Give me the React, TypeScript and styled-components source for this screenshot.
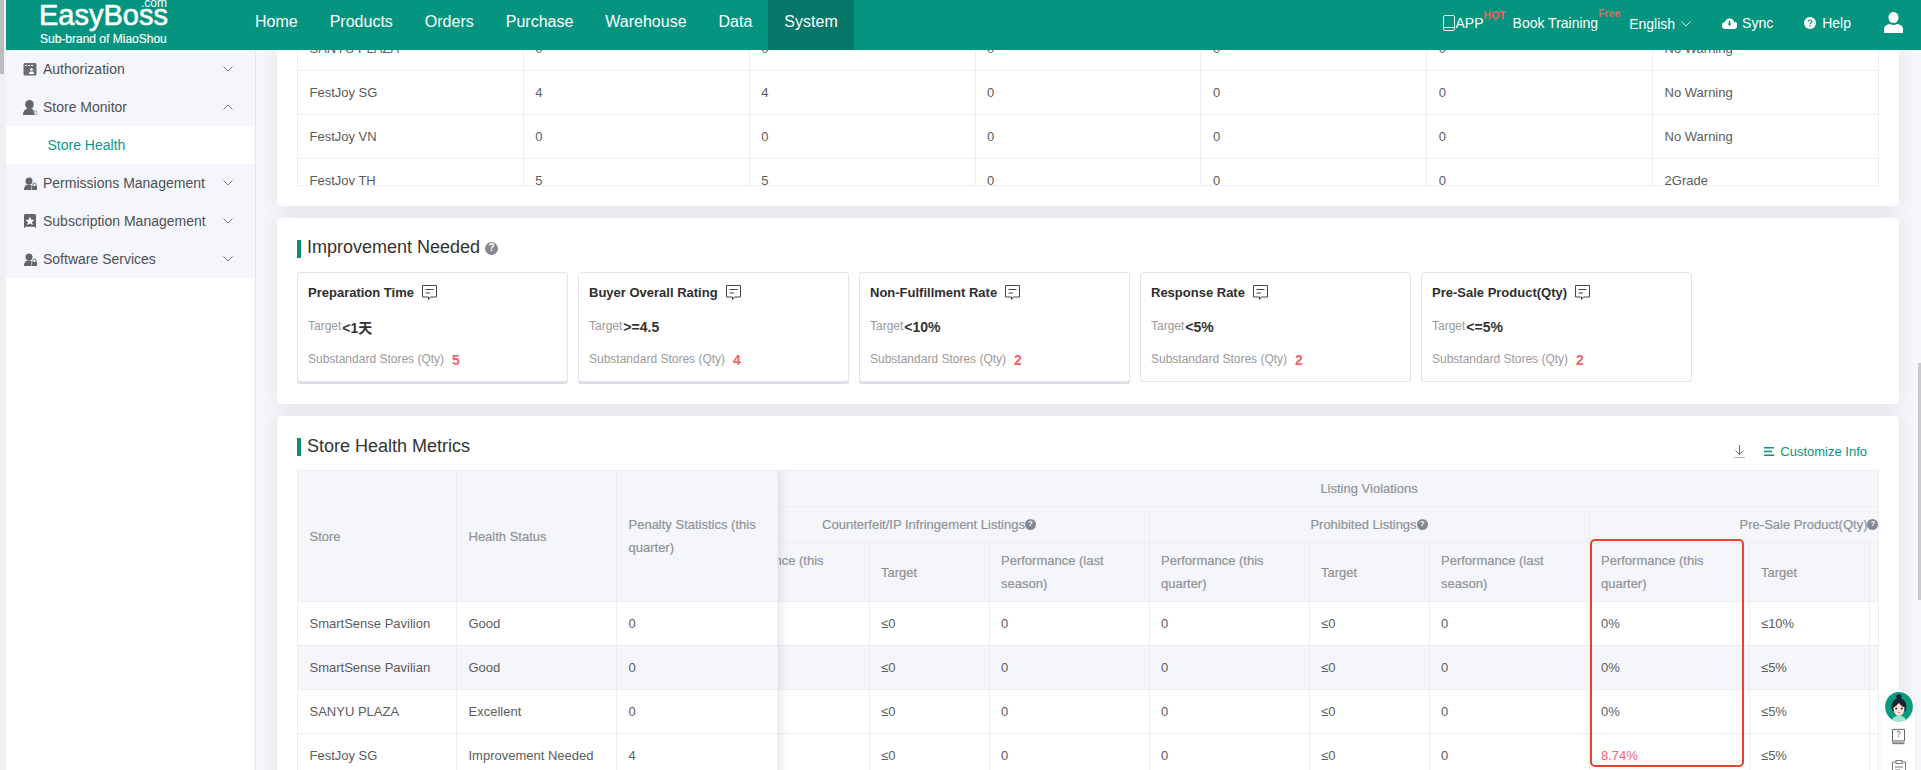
import React from "react";
import styled, { createGlobalStyle } from "styled-components";

const Global = createGlobalStyle`
  html, body { margin: 0; padding: 0; width: 1921px; height: 770px; overflow: hidden; background: #fff; }
  body { font-family: "Liberation Sans", Arial, "Noto Sans CJK SC", sans-serif; color: #555; }
  * { box-sizing: border-box; }
`;

const TEAL = "#059480";
const LINE = "#eceef4";

const Frame = styled.div`display: flex; width: 1921px; height: 770px; overflow: hidden;`;
const LeftRail = styled.div`width: 6px; flex: none; background: #f0f0f0;`;
const LeftThumb = styled.div`width: 4px; height: 74px; background: #bcbcbc;`;
const Column = styled.div`flex: 1; min-width: 0; display: flex; flex-direction: column;`;

const Header = styled.header`height: 50px; flex: none; display: flex; background: ${TEAL}; color: #fff; position: relative; z-index: 2;`;
const Logo = styled.div`width: 200px; margin-left: 33px; flex: none; position: relative;`;
const LogoName = styled.div`font-size: 29px; line-height: 30px; height: 32px; -webkit-text-stroke: 0.6px #fff;`;
const LogoDotCom = styled.span`position: absolute; left: 102px; top: -1px; font-size: 12px; line-height: 9px;`;
const LogoSub = styled.div`font-size: 12px; line-height: 14px; padding-left: 1px; -webkit-text-stroke: 0.15px #fff;`;
const Nav = styled.nav`display: flex; height: 100%;`;
const NavItem = styled.a<{ $active?: boolean }>`
  padding: 0 16px; height: 50px; line-height: 43px; font-size: 16px; color: #fff;
  background: ${(p) => (p.$active ? "#07776a" : "transparent")};
`;
const HeaderTools = styled.div`margin-left: auto; display: flex; align-items: center; gap: 31px; height: 45px; padding-right: 18px; font-size: 14px;`;
const Tool = styled.div`position: relative; display: flex; align-items: center; gap: 5px; line-height: 16px;`;
const ToolBadge = styled.span<{ $top: number }>`
  position: absolute; left: 100%; top: ${(p) => p.$top}px; font-size: 10.5px; line-height: 12px; font-weight: 700; color: #ec6360; white-space: nowrap;
`;
const UserTool = styled(Tool)`margin-left: 2px;`;
const AppTool = styled(Tool)`gap: 1px; margin-right: -2px;`;
const LanguageTool = styled(Tool)`gap: 6px; top: 1px;`;
const HelpTool = styled(Tool)`gap: 6px;`;

const Body = styled.div`flex: 1; display: flex; min-height: 0;`;
const Sidebar = styled.aside`width: 250px; flex: none; background: #fff; border-right: 1px solid #e3e4e9; position: relative; z-index: 1;`;
const MenuItem = styled.div<{ $sub?: boolean }>`
  height: 38px; display: flex; align-items: center; gap: 6px; font-size: 14px;
  padding: 0 22px 0 ${(p) => (p.$sub ? "41.5px" : "17px")};
  background: ${(p) => (p.$sub ? "#fff" : "#f5f6fb")};
  color: ${(p) => (p.$sub ? "#0a9a87" : "#4c4f55")};
`;
const MenuLabel = styled.span`flex: 1;`;

const Main = styled.main`flex: 1; min-width: 0; background: #f5f6fa; padding: 0 22px 0 21px; overflow: hidden; position: relative;`;
const Card = styled.section`background: #fff; border-radius: 4px; box-shadow: 0 0 20px rgba(20, 30, 60, 0.09); padding: 0 20px;`;
const TopCard = styled(Card)`height: 156px; border-radius: 0 0 4px 4px;`;
const MiddleCard = styled(Card)`height: 186px; margin-top: 12px; padding-top: 22px;`;
const BottomCard = styled(Card)`height: 400px; margin-top: 12px; padding-top: 22px;`;

const TopClip = styled.div`height: 136px; overflow: hidden; border-bottom: 1px solid ${LINE};`;
const Grid = styled.table`border-collapse: collapse; table-layout: fixed; font-size: 13px; color: #5c5c5c;`;
const TopGrid = styled(Grid)`width: 1582px; margin-top: -24px;`;
const Td = styled.td<{ $alert?: boolean }>`
  height: 44px; padding: 0 11.5px; border: 1px solid ${LINE}; white-space: nowrap; overflow: hidden;
  color: ${(p) => (p.$alert ? "#f4606a" : "inherit")};
`;
const Tr = styled.tr<{ $stripe?: boolean }>`background: ${(p) => (p.$stripe ? "#f5f6fa" : "#fff")};`;

const TitleRow = styled.div`display: flex; align-items: center; height: 18px;`;
const TitleBar = styled.span`width: 4px; height: 18px; background: #0b8f7b; margin-right: 6px;`;
const Title = styled.h2`margin: 0; font-size: 18px; font-weight: 400; line-height: 18px; color: #333; position: relative; top: -2px;`;
const MetricsTitle = styled(Title)`top: -1px;`;
const HelpDot = styled.span<{ $size: number }>`
  display: inline-flex; align-items: center; justify-content: center; flex: none;
  width: ${(p) => p.$size}px; height: ${(p) => p.$size}px; border-radius: 50%;
  background: #85888e; color: #fff; font-size: ${(p) => p.$size - 3}px; font-weight: 700; line-height: 1;
`;
const TitleHelp = styled(HelpDot)`margin-left: 5px; position: relative; top: -1px;`;

const MetricRow = styled.div`display: flex; gap: 10px; margin-top: 14px;`;
const Metric = styled.div<{ $raised: boolean }>`
  width: 271px; height: 110px; padding: 3px 10px 0; border: 1px solid #e3e5ec; border-radius: 3px; background: #fff;
  box-shadow: ${(p) => (p.$raised ? "0 2px 0 #dcdee6" : "none")};
`;
const MetricLine = styled.div`height: 33px; display: flex; align-items: center;`;
const MetricName = styled.span`font-size: 13px; font-weight: 700; color: #2e2e2e; margin-right: 8px;`;
const MetricLabel = styled.span`font-size: 12px; color: #9a9a9a;`;
const MetricTarget = styled.span`font-size: 14px; font-weight: 700; color: #333; margin-left: 1px; position: relative; top: 1px;`;
const MetricCount = styled.span`font-size: 14px; font-weight: 700; color: #f4606a; margin-left: 8px; position: relative; top: 1px;`;

const TableHeadRow = styled.div`display: flex; align-items: center;`;
const TableTools = styled.div`margin-left: auto; display: flex; align-items: center; gap: 19px; padding-right: 12px; position: relative; top: 4px;`;
const CustomizeLink = styled.a`display: flex; align-items: center; gap: 6px; font-size: 13px; color: ${TEAL};`;

const TableWrap = styled.div`position: relative; width: 1582px; height: 320px; margin-top: 14px; overflow: hidden; border-right: 1px solid ${LINE};`;
const ScrollGrid = styled(Grid)`width: 1320px; margin-left: 411.5px;`;
const FrozenGrid = styled(Grid)`
  position: absolute; left: 0; top: 0; width: 480px; box-shadow: 4px 0 8px rgba(20, 30, 60, 0.09); background: #fff; z-index: 1;
`;
const Th = styled.th<{ $h?: number; $center?: boolean }>`
  height: ${(p) => p.$h ?? 36}px; padding: 0 11.5px; border: 1px solid ${LINE}; background: #f5f6fa;
  font-size: 13px; font-weight: 400; line-height: 23px; color: #8b8e94; overflow: hidden;
  -webkit-text-stroke: 0.2px #9a9da3;
  text-align: ${(p) => (p.$center ? "center" : "left")};
`;
const ThHelp = styled(HelpDot)`vertical-align: 3px; margin-left: 0; -webkit-text-stroke: 0;`;
const Highlight = styled.div`
  position: absolute; left: 1293px; top: 69px; width: 154px; height: 228px; border: 2px solid #e8412c; border-radius: 5px; z-index: 2; pointer-events: none;
`;

const RightThumb = styled.div`position: absolute; right: 0; top: 313px; width: 3px; height: 237px; background: #c9c9c9;`;
const HelpWidget = styled.div`
  position: absolute; right: 6px; top: 640px; width: 33px; height: 90px; background: #fff; border-radius: 17px 17px 0 0;
  display: flex; flex-direction: column; align-items: center; gap: 6px; padding-top: 1px; box-shadow: 0 0 4px rgba(0,0,0,.05);
`;
const NoteSlot = styled.div`margin-top: 9px;`;

const Chevron = ({ up, color = "#7a7d83" }: { up?: boolean; color?: string }) => (
  <svg width="10" height="6" viewBox="0 0 10 6" fill="none">
    <path d={up ? "M.5 5.5 5 1l4.500 4.500" : "M.5.5 5 5 9.500.5"} stroke={color} strokeWidth="1" />
  </svg>
);

const icons: Record<string, React.ReactNode> = {
  auth: (
    <>
      <rect x="0.500" y="1" width="13" height="12.500" rx="1.500" fill="#6b6d72" />
      <rect x="2" y="3" width="2" height="1" fill="#fff" /><rect x="5" y="3" width="2" height="1" fill="#fff" /><rect x="8" y="3" width="2" height="1" fill="#fff" />
      <circle cx="8.500" cy="7.500" r="1.300" fill="#fff" /><path d="M6 12c0-2 1-2.500 2.500-2.500S11 10 11 12z" fill="#fff" />
    </>
  ),
  monitor: (
    <>
      <ellipse cx="6.500" cy="4.500" rx="4.300" ry="4.500" fill="#63656a" />
      <path d="M0 15c0-4 2-6.500 6.500-6.500S11 11 11 15z" fill="#63656a" />
      <rect x="11.300" y="11" width="2.500" height="3.500" fill="none" stroke="#8a8c91" strokeWidth=".7" />
    </>
  ),
  perm: (
    <>
      <circle cx="6" cy="5" r="3.500" fill="#63656a" />
      <path d="M1 14c0-4 2-5.500 5-5.500 1 0 2 .2 2.500.6V14z" fill="#63656a" />
      <rect x="9" y="10" width="5" height="4" rx=".6" fill="#63656a" />
      <path d="M10 10V8.500a1.500 1.500 0 0 1 3 0V10" stroke="#63656a" fill="none" />
    </>
  ),
  sub: (
    <>
      <path d="M1 1.500A1.500 1.500 0 0 1 2.500 0h9A1.500 1.500 0 0 1 13 1.500V14l-2-1.300H3L1 14z" fill="#63656a" />
      <path d="m7 2.800 1.300 2.700 3 .4-2.200 2 .6 3L7 9.400 4.300 10.900l.6-3-2.200-2 3-.4z" fill="#fff" />
    </>
  ),
};

const MenuIcon = ({ name }: { name: string }) => (
  <svg width="14" height="15" viewBox="0 0 14 15">{icons[name]}</svg>
);

const CommentIcon = () => (
  <svg width="15" height="15" viewBox="0 0 15 15" fill="none" stroke="#44464b" strokeWidth="1">
    <path d="M.5.5h14v11.500H8.500L6.500 14.500V12H.5z" />
    <path d="M3.500 4.500h8M3.500 8h4.500" />
  </svg>
);

const PhoneIcon = () => (
  <svg width="12" height="16" viewBox="0 0 12 16" fill="none" stroke="#dff5f0" strokeWidth="1">
    <rect x=".5" y=".5" width="11" height="15" rx="1.500" />
    <path d="M.5 12.500h11" />
  </svg>
);
const CloudIcon = () => (
  <svg width="15" height="12" viewBox="0 0 15 12">
    <path d="M3.500 12A3.500 3.500 0 0 1 3 5 4.700 4.700 0 0 1 12 4.700 3.600 3.600 0 0 1 11.500 12z" fill="#fff" />
    <path d="M6.800 3.500h1.400v3.300h-1.400zM5.500 6.500h4L7.500 9z" fill={TEAL} />
  </svg>
);
const HelpCircleIcon = () => (
  <svg width="12" height="12" viewBox="0 0 12 12">
    <circle cx="6" cy="6" r="6" fill="#fff" />
    <path d="M4.200 4.600C4.300 3.500 5 3 6 3s1.800.6 1.800 1.500c0 1.300-1.600 1.300-1.600 2.700" stroke={TEAL} strokeWidth="1.200" fill="none" />
    <rect x="5.500" y="8" width="1.300" height="1.300" fill={TEAL} />
  </svg>
);
const UserIcon = () => (
  <svg width="19" height="21" viewBox="0 0 19 21" fill="#fff">
    <ellipse cx="9.500" cy="5.500" rx="5" ry="5.500" />
    <path d="M0 21v-4c0-3 3-4.500 6-5 2 1.200 5 1.200 7 0 3 .5 6 2 6 5v4z" />
  </svg>
);
const DownloadIcon = () => (
  <svg width="11" height="13" viewBox="0 0 11 13" fill="none" stroke="#6d6f74" strokeWidth="1">
    <path d="M5.500 0v9M1.500 5.500l4 4 4-4" />
    <path d="M0 12.500h11" stroke="#b0b2b6" />
  </svg>
);
const ListIcon = () => (
  <svg width="10" height="9" viewBox="0 0 10 9" fill={TEAL}>
    <rect width="10" height="1.500" /><rect y="3.700" width="8" height="1.500" /><rect y="7.500" width="10" height="1.500" />
  </svg>
);
const Avatar = () => (
  <svg width="32" height="34" viewBox="0 0 32 34">
    <defs><clipPath id="av"><ellipse cx="16" cy="17" rx="15" ry="16" /></clipPath></defs>
    <ellipse cx="16" cy="17" rx="16" ry="17" fill="#fff" />
    <g clipPath="url(#av)">
      <rect width="32" height="34" fill="#0b9a80" />
      <path d="M8 34c0-5 3-7 8-7s8 2 8 7z" fill="#9fe8cc" />
      <circle cx="16" cy="6.500" r="3" fill="#1b2230" />
      <path d="M8 18c0-7 3-10 8-10s8 3 8 10l-1 4H9z" fill="#1b2230" />
      <path d="M10 18c2-1 4-3 6-5 1 2 4 4 6 5 0 5-2.500 9-6 9s-6-4-6-9z" fill="#fde3d8" />
      <circle cx="13" cy="19" r="1" fill="#222" /><circle cx="19" cy="19" r="1" fill="#222" />
      <path d="M14.700 22.700h2.600L16 24.500z" fill="#e4574f" />
    </g>
  </svg>
);
const BookIcon = () => (
  <svg width="15" height="18" viewBox="0 0 15 18" fill="none" stroke="#55575c" strokeWidth="1">
    <path d="M1 14V1.500h13V14H2.500A1.500 1.500 0 0 0 2.500 17H14" />
    <path d="M1 14v1.500M1.500 15.500H14" stroke="#8a8c91" />
    <path d="M5.800 5c.2-1 1-1.500 1.800-1.500S9.300 4.100 9.300 5c0 1.300-1.700 1.200-1.700 2.800M7.600 9v1" />
  </svg>
);
const NoteIcon = () => (
  <svg width="14" height="16" viewBox="0 0 14 16" fill="none" stroke="#77797e" strokeWidth="1">
    <rect x=".5" y="2" width="13" height="14" /><rect x="4" y=".5" width="6" height="3" fill="#fff" />
    <path d="M3 7h8M3 10h5" />
  </svg>
);

const topRows = [
  ["SANYU PLAZA", "0", "0", "0", "0", "0", "No Warning"],
  ["FestJoy SG", "4", "4", "0", "0", "0", "No Warning"],
  ["FestJoy VN", "0", "0", "0", "0", "0", "No Warning"],
  ["FestJoy TH", "5", "5", "0", "0", "0", "2Grade"],
];

const metrics = [
  { name: "Preparation Time", target: "<1天", count: 5, raised: true },
  { name: "Buyer Overall Rating", target: ">=4.5", count: 4, raised: true },
  { name: "Non-Fulfillment Rate", target: "<10%", count: 2, raised: true },
  { name: "Response Rate", target: "<5%", count: 2, raised: false },
  { name: "Pre-Sale Product(Qty)", target: "<=5%", count: 2, raised: false },
];

const stores = [
  { name: "SmartSense Pavilion", status: "Good", penalty: "0", perf: "0%", target: "≤10%" },
  { name: "SmartSense Pavilian", status: "Good", penalty: "0", perf: "0%", target: "≤5%" },
  { name: "SANYU PLAZA", status: "Excellent", penalty: "0", perf: "0%", target: "≤5%" },
  { name: "FestJoy SG", status: "Improvement Needed", penalty: "4", perf: "8.74%", target: "≤5%" },
];

const columnGroup = [160, 120, 160];
const groupHeads = ["Performance (this quarter)", "Target", "Performance (last season)"];

export default function App() {
  return (
    <Frame>
      <Global />
      <LeftRail><LeftThumb /></LeftRail>
      <Column>
        <Header>
          <Logo>
            <LogoDotCom>.com</LogoDotCom>
            <LogoName>EasyBoss</LogoName>
            <LogoSub>Sub-brand of MiaoShou</LogoSub>
          </Logo>
          <Nav>
            {["Home", "Products", "Orders", "Purchase", "Warehouse", "Data"].map((n) => (
              <NavItem key={n}>{n}</NavItem>
            ))}
            <NavItem $active>System</NavItem>
          </Nav>
          <HeaderTools>
            <AppTool><PhoneIcon />APP<ToolBadge $top={-6}>HOT</ToolBadge></AppTool>
            <Tool>Book Training<ToolBadge $top={-8}>Free</ToolBadge></Tool>
            <LanguageTool>English<Chevron color="#d5efe9" /></LanguageTool>
            <Tool><CloudIcon />Sync</Tool>
            <HelpTool><HelpCircleIcon />Help</HelpTool>
            <UserTool><UserIcon /></UserTool>
          </HeaderTools>
        </Header>
        <Body>
          <Sidebar>
            <MenuItem><MenuIcon name="auth" /><MenuLabel>Authorization</MenuLabel><Chevron /></MenuItem>
            <MenuItem><MenuIcon name="monitor" /><MenuLabel>Store Monitor</MenuLabel><Chevron up /></MenuItem>
            <MenuItem $sub><MenuLabel>Store Health</MenuLabel></MenuItem>
            <MenuItem><MenuIcon name="perm" /><MenuLabel>Permissions Management</MenuLabel><Chevron /></MenuItem>
            <MenuItem><MenuIcon name="sub" /><MenuLabel>Subscription Management</MenuLabel><Chevron /></MenuItem>
            <MenuItem><MenuIcon name="perm" /><MenuLabel>Software Services</MenuLabel><Chevron /></MenuItem>
          </Sidebar>
          <Main>
            <TopCard>
              <TopClip>
                <TopGrid>
                  <tbody>
                    {topRows.map((r) => (
                      <Tr key={r[0]}>{r.map((c, i) => <Td key={i}>{c}</Td>)}</Tr>
                    ))}
                  </tbody>
                </TopGrid>
              </TopClip>
            </TopCard>

            <MiddleCard>
              <TitleRow>
                <TitleBar />
                <Title>Improvement Needed</Title>
                <TitleHelp $size={13}>?</TitleHelp>
              </TitleRow>
              <MetricRow>
                {metrics.map((m) => (
                  <Metric key={m.name} $raised={m.raised}>
                    <MetricLine><MetricName>{m.name}</MetricName><CommentIcon /></MetricLine>
                    <MetricLine><MetricLabel>Target</MetricLabel><MetricTarget>{m.target}</MetricTarget></MetricLine>
                    <MetricLine><MetricLabel>Substandard Stores (Qty)</MetricLabel><MetricCount>{m.count}</MetricCount></MetricLine>
                  </Metric>
                ))}
              </MetricRow>
            </MiddleCard>

            <BottomCard>
              <TableHeadRow>
                <TitleBar />
                <MetricsTitle>Store Health Metrics</MetricsTitle>
                <TableTools>
                  <DownloadIcon />
                  <CustomizeLink><ListIcon />Customize Info</CustomizeLink>
                </TableTools>
              </TableHeadRow>
              <TableWrap>
                <FrozenGrid>
                  <colgroup><col width={159} /><col width={160} /><col width={161} /></colgroup>
                  <thead>
                    <tr>
                      <Th $h={131}>Store</Th>
                      <Th $h={131}>Health Status</Th>
                      <Th $h={131}>Penalty Statistics (this quarter)</Th>
                    </tr>
                  </thead>
                  <tbody>
                    {stores.map((s, i) => (
                      <Tr key={s.name} $stripe={i === 1}>
                        <Td>{s.name}</Td><Td>{s.status}</Td><Td>{s.penalty}</Td>
                      </Tr>
                    ))}
                  </tbody>
                </FrozenGrid>
                <ScrollGrid>
                  <colgroup>
                    {[0, 1, 2].map((g) => columnGroup.map((w, i) => <col key={`${g}-${i}`} width={w} />))}
                  </colgroup>
                  <thead>
                    <tr><Th $center colSpan={9}>Listing Violations</Th></tr>
                    <tr>
                      <Th $center colSpan={3}>Counterfeit/IP Infringement Listings<ThHelp $size={11}>?</ThHelp></Th>
                      <Th $center colSpan={3}>Prohibited Listings<ThHelp $size={11}>?</ThHelp></Th>
                      <Th $center colSpan={3}>Pre-Sale Product(Qty)<ThHelp $size={11}>?</ThHelp></Th>
                    </tr>
                    <tr>
                      {[0, 1, 2].map((g) => groupHeads.map((h) => <Th key={`${g}-${h}`} $h={59}>{h}</Th>))}
                    </tr>
                  </thead>
                  <tbody>
                    {stores.map((s, i) => (
                      <Tr key={s.name} $stripe={i === 1}>
                        <Td>0</Td><Td>≤0</Td><Td>0</Td>
                        <Td>0</Td><Td>≤0</Td><Td>0</Td>
                        <Td $alert={s.perf !== "0%"}>{s.perf}</Td><Td>{s.target}</Td><Td>0</Td>
                      </Tr>
                    ))}
                  </tbody>
                </ScrollGrid>
                <Highlight />
              </TableWrap>
            </BottomCard>
            <RightThumb />
            <HelpWidget>
              <Avatar />
              <BookIcon />
              <NoteSlot><NoteIcon /></NoteSlot>
            </HelpWidget>
          </Main>
        </Body>
      </Column>
    </Frame>
  );
}
